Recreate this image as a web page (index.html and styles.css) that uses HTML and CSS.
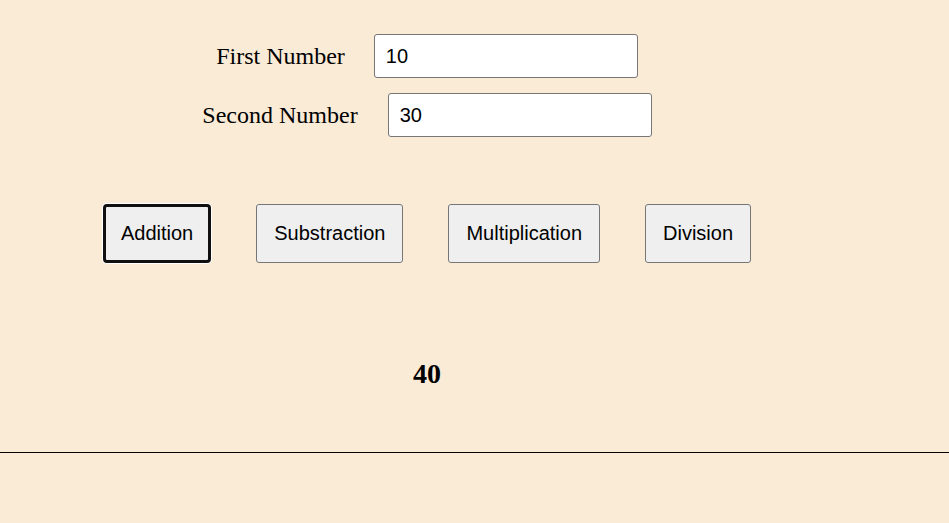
FILE: index.html
```html
<!DOCTYPE html>
<html lang="en">
<head>
    <meta charset="UTF-8">
    <meta name="viewport" content="width=device-width, initial-scale=1.0">
    <title>Calculator</title>
    <link rel="stylesheet" href="styles.css">
</head>
<body>
    <div class="calc">
        <div class="field-row">
            <label for="first" class="field-label">First Number</label>
            <input type="text" id="first" class="field-input" value="10">
        </div>

        <div class="field-row">
            <label for="second" class="field-label">Second Number</label>
            <input type="text" id="second" class="field-input" value="30">
        </div>

        <div class="btn-row">
            <button class="op-btn active">Addition</button>
            <button class="op-btn">Substraction</button>
            <button class="op-btn">Multiplication</button>
            <button class="op-btn">Division</button>
        </div>

        <div class="result">40</div>
    </div>

    <div class="divider"></div>
</body>
</html>
```

FILE: styles.css
```css
body {
    margin: 0;
    background: #FAEBD7;
    font-family: "Liberation Serif", "Times New Roman", serif;
}

.calc {
    width: 838px;
    margin-left: 8px;
    padding-top: 34px;
    display: flex;
    flex-direction: column;
    align-items: center;
}

.field-row {
    display: flex;
    align-items: center;
    gap: 29px;
    margin-bottom: 15px;
}

.field-row + .field-row {
    gap: 30px;
}

.field-label {
    font-size: 24px;
    color: #000;
}

.field-input {
    box-sizing: border-box;
    width: 264px;
    height: 44px;
    padding: 0 11px;
    border: 1px solid #767676;
    border-radius: 3px;
    background: #FFF;
    font-family: "Liberation Sans", Arial, sans-serif;
    font-size: 20px;
    color: #000;
}

.btn-row {
    display: flex;
    gap: 45px;
    margin-top: 52px;
}

.op-btn {
    box-sizing: border-box;
    height: 59px;
    padding: 0 17px;
    border: 1px solid #767676;
    border-radius: 3px;
    background: #EFEFEF;
    font-family: "Liberation Sans", Arial, sans-serif;
    font-size: 20px;
    color: #000;
    cursor: pointer;
}

.op-btn.active {
    border: 3px solid #101010;
    border-radius: 4px;
    padding: 0 15px;
    box-shadow: 0 0 0 1px #FFF;
}

.result {
    margin-top: 95px;
    font-size: 28px;
    font-weight: bold;
}

.divider {
    margin-top: 62px;
    border-top: 1px solid #000;
}
```
